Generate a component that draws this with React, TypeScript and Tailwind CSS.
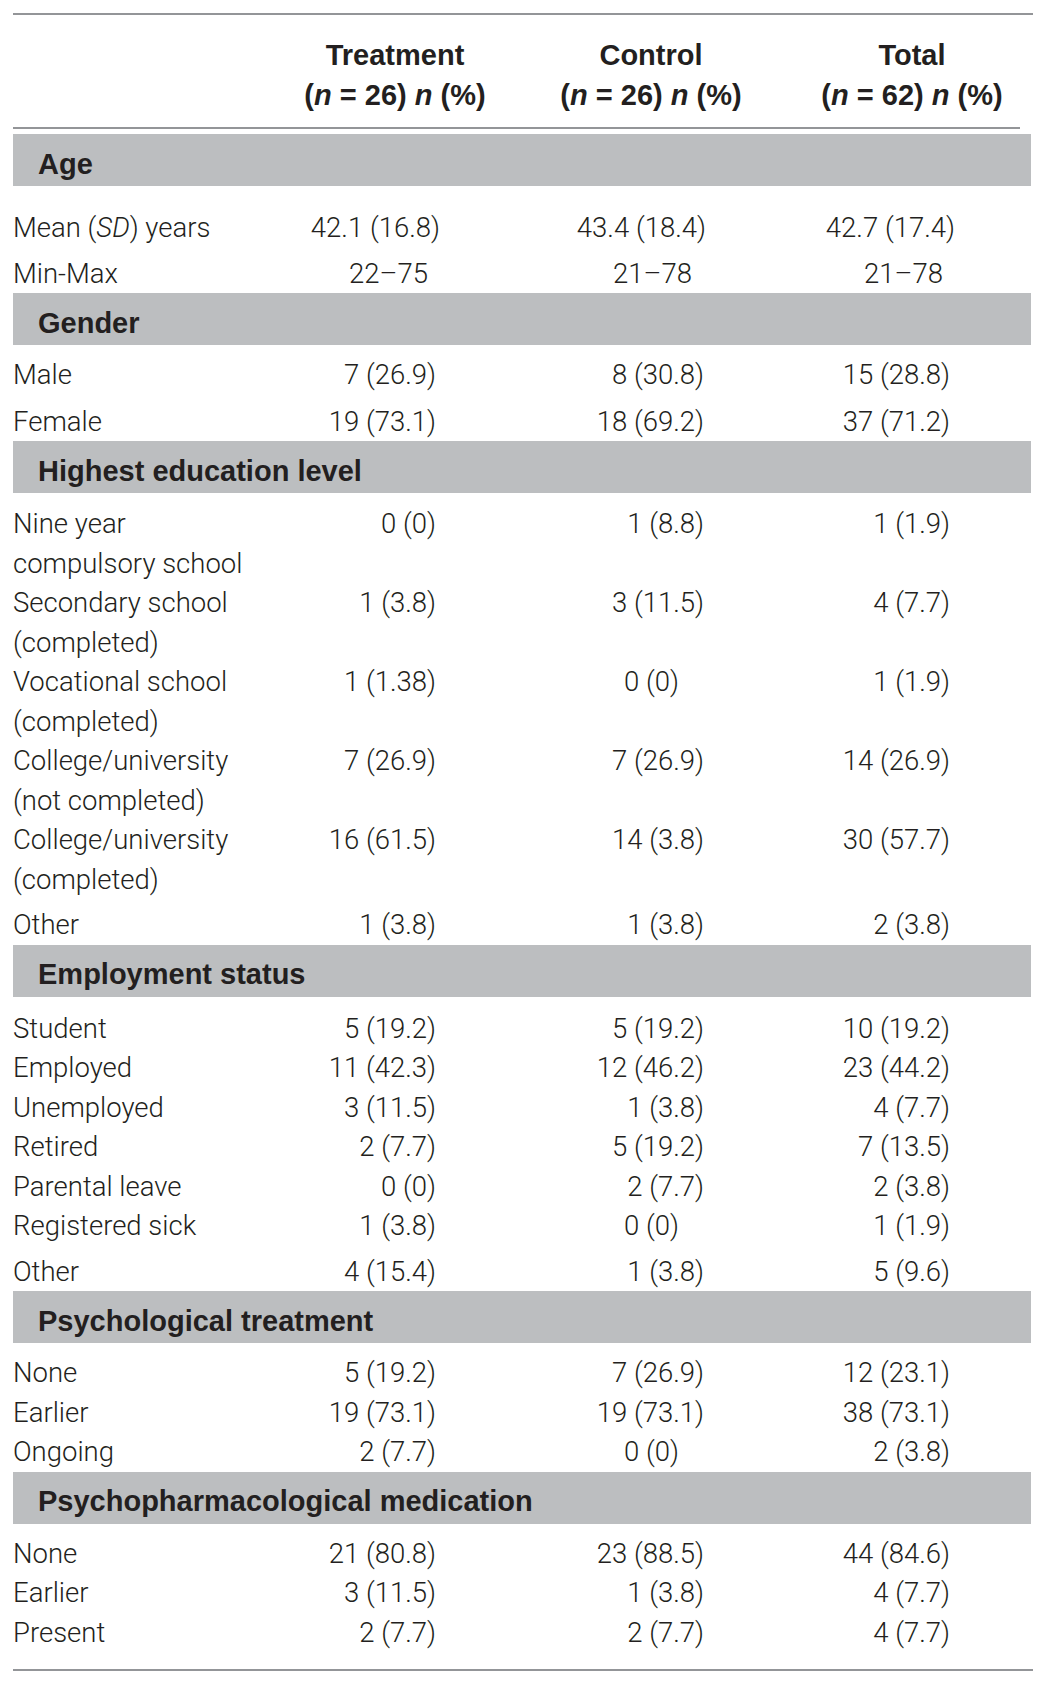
import type { ReactNode } from 'react';

type Cell = string | [string, string];

interface IRow {
  label: ReactNode;
  values: Cell[];
  className?: string;
}

interface ISection {
  title: string;
  bodyClass: string;
  rows: IRow[];
}

const zero: Cell = ['0 (0)', 'pr-[35px]'];

const sections: ISection[] = [
  {
    title: 'Age',
    bodyClass: 'pt-[22px]',
    rows: [
      {
        label: (
          <>
            Mean (<i>SD</i>) years
          </>
        ),
        values: [
          ['42.1 (16.8)', 'pr-[6px]'],
          ['43.4 (18.4)', 'pr-[8px]'],
          ['42.7 (17.4)', 'pr-[5px]'],
        ],
      },
      {
        label: 'Min-Max',
        values: [
          ['22–75', 'pr-[18px]'],
          ['21–78', 'pr-[22px]'],
          ['21–78', 'pr-[17px]'],
        ],
        className: 'mt-[6px]',
      },
    ],
  },
  {
    title: 'Gender',
    bodyClass: 'pt-[10px]',
    rows: [
      { label: 'Male', values: ['7 (26.9)', '8 (30.8)', '15 (28.8)'] },
      {
        label: 'Female',
        values: ['19 (73.1)', '18 (69.2)', '37 (71.2)'],
        className: 'mt-[7px]',
      },
    ],
  },
  {
    title: 'Highest education level',
    bodyClass: 'pt-[11px]',
    rows: [
      {
        label: (
          <>
            Nine year
            <br />
            compulsory school
          </>
        ),
        values: ['0 (0)', '1 (8.8)', '1 (1.9)'],
      },
      {
        label: (
          <>
            Secondary school
            <br />
            (completed)
          </>
        ),
        values: ['1 (3.8)', '3 (11.5)', '4 (7.7)'],
      },
      {
        label: (
          <>
            Vocational school
            <br />
            (completed)
          </>
        ),
        values: ['1 (1.38)', zero, '1 (1.9)'],
      },
      {
        label: (
          <>
            College/university
            <br />
            (not completed)
          </>
        ),
        values: ['7 (26.9)', '7 (26.9)', '14 (26.9)'],
      },
      {
        label: (
          <>
            College/university
            <br />
            (completed)
          </>
        ),
        values: ['16 (61.5)', '14 (3.8)', '30 (57.7)'],
      },
      {
        label: 'Other',
        values: ['1 (3.8)', '1 (3.8)', '2 (3.8)'],
        className: 'mt-[6px]',
      },
    ],
  },
  {
    title: 'Employment status',
    bodyClass: 'pt-[12px]',
    rows: [
      { label: 'Student', values: ['5 (19.2)', '5 (19.2)', '10 (19.2)'] },
      { label: 'Employed', values: ['11 (42.3)', '12 (46.2)', '23 (44.2)'] },
      { label: 'Unemployed', values: ['3 (11.5)', '1 (3.8)', '4 (7.7)'] },
      { label: 'Retired', values: ['2 (7.7)', '5 (19.2)', '7 (13.5)'] },
      { label: 'Parental leave', values: ['0 (0)', '2 (7.7)', '2 (3.8)'] },
      { label: 'Registered sick', values: ['1 (3.8)', zero, '1 (1.9)'] },
      {
        label: 'Other',
        values: ['4 (15.4)', '1 (3.8)', '5 (9.6)'],
        className: 'mt-[6px]',
      },
    ],
  },
  {
    title: 'Psychological treatment',
    bodyClass: 'pt-[10px]',
    rows: [
      { label: 'None', values: ['5 (19.2)', '7 (26.9)', '12 (23.1)'] },
      { label: 'Earlier', values: ['19 (73.1)', '19 (73.1)', '38 (73.1)'] },
      { label: 'Ongoing', values: ['2 (7.7)', zero, '2 (3.8)'] },
    ],
  },
  {
    title: 'Psychopharmacological medication',
    bodyClass: 'pt-[10px]',
    rows: [
      { label: 'None', values: ['21 (80.8)', '23 (88.5)', '44 (84.6)'] },
      { label: 'Earlier', values: ['3 (11.5)', '1 (3.8)', '4 (7.7)'] },
      { label: 'Present', values: ['2 (7.7)', '2 (7.7)', '4 (7.7)'] },
    ],
  },
];

const colWidths = ['w-[173px]', 'w-[268px]', 'w-[246px]'];

const ValueCell = ({ cell, width }: { cell: Cell; width: string }) => {
  const [text, pad] = typeof cell === 'string' ? [cell, 'pr-[10px]'] : cell;
  return (
    <div className={`${width} ${pad} shrink-0 whitespace-nowrap text-right`}>
      {text}
    </div>
  );
};

const HeaderCell = ({ title, n }: { title: string; n: number }) => (
  <div className="w-[200px] shrink-0 text-center">
    {title}
    <br />
    (<i>n</i> = {n}) <i>n</i> (%)
  </div>
);

const App = () => {
  return (
    <div className="min-h-[1684px] w-[1048px] bg-white pt-[13px] text-[#231f20]">
      <div className="ml-[13px] w-[1020px]">
        {/* column headers */}
        <div className="border-t-2 border-[#939598]">
          <div className="flex w-[1007px] border-b-2 border-[#939598] pb-[12px] pt-[21px] font-['Liberation_Sans',Arial,sans-serif] text-[29px] font-bold leading-[39.5px]">
            <div className="w-[282px] shrink-0" />
            <HeaderCell title="Treatment" n={26} />
            <div className="w-[56px] shrink-0" />
            <HeaderCell title="Control" n={26} />
            <div className="w-[61px] shrink-0" />
            <HeaderCell title="Total" n={62} />
          </div>
        </div>

        <div className="mt-[5px]">
          {sections.map((sec) => (
            <div key={sec.title}>
              <div className="flex h-[52px] w-[1018px] items-center bg-[#bcbec0] pl-[25px] pt-[9px] font-['Liberation_Sans',Arial,sans-serif] text-[29px] font-bold">
                {sec.title}
              </div>
              <div
                className={`${sec.bodyClass} font-['Roboto',sans-serif] text-[27.5px] font-light leading-[39.5px]`}
              >
                {sec.rows.map((row, i) => (
                  <div key={i} className={`flex items-start ${row.className ?? ''}`}>
                    <div className="w-[260px] shrink-0">{row.label}</div>
                    {row.values.map((v, j) => (
                      <ValueCell key={j} cell={v} width={colWidths[j]} />
                    ))}
                  </div>
                ))}
              </div>
            </div>
          ))}
        </div>

        <div className="mt-[17px] border-t-2 border-[#939598]" />
      </div>
    </div>
  );
};

export default App;
